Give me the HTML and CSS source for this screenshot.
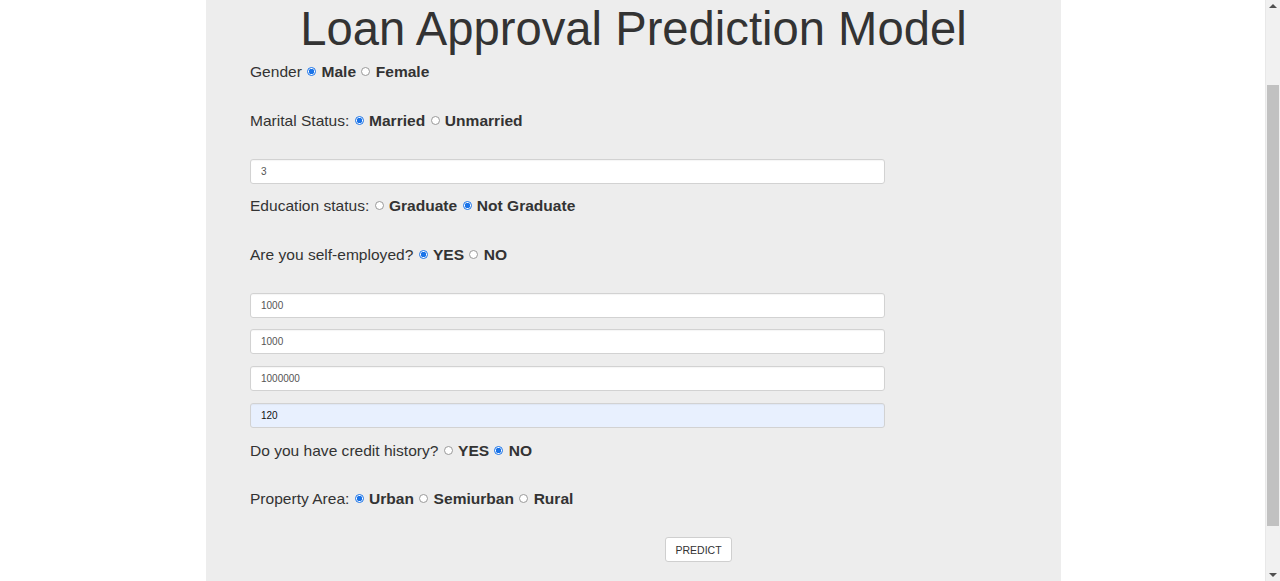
FILE: index.html
```html
<!DOCTYPE html>
<html>
<head>
<meta charset="utf-8">
<link rel="stylesheet" href="styles.css">
</head>
<body>
<div class="viewport">
  <main class="page">
    <div class="panel">
      <h1 class="title">Loan Approval Prediction Model</h1>
      <form class="form">
        <div class="radio-row">Gender <input type="radio" name="g" checked> <b>Male</b> <input type="radio" name="g"> <b>Female</b></div>
        <div class="radio-row">Marital Status: <input type="radio" name="m" checked> <b>Married</b> <input type="radio" name="m"> <b>Unmarried</b></div>
        <input class="field" type="text" value="3">
        <div class="radio-row">Education status: <input type="radio" name="e"> <b>Graduate</b> <input type="radio" name="e" checked> <b>Not Graduate</b></div>
        <div class="radio-row">Are you self-employed? <input type="radio" name="s" checked> <b>YES</b> <input type="radio" name="s"> <b>NO</b></div>
        <input class="field" type="text" value="1000">
        <input class="field" type="text" value="1000">
        <input class="field" type="text" value="1000000">
        <input class="field field-filled" type="text" value="120">
        <div class="radio-row radio-tight">Do you have credit history? <input type="radio" name="c"> <b>YES</b> <input type="radio" name="c" checked> <b>NO</b></div>
        <div class="radio-row radio-tight">Property Area: <input type="radio" name="p" checked> <b>Urban</b> <input type="radio" name="p"> <b>Semiurban</b> <input type="radio" name="p"> <b>Rural</b></div>
        <div class="actions"><button type="button" class="btn">PREDICT</button></div>
      </form>
    </div>
  </main>
  <div class="scrollbar">
    <div class="arrow arrow-up"></div>
    <div class="track"><div class="thumb"></div></div>
    <div class="arrow arrow-down"></div>
  </div>
</div>
</body>
</html>
```
FILE: styles.css
```css
html, body {
  margin: 0;
  padding: 0;
  height: 100%;
  overflow: hidden;
  background: #ffffff;
}
.viewport {
  display: flex;
  height: 581px;
}
.page {
  flex: 1;
  display: flex;
  justify-content: center;
  padding-left: 2px;
}
.panel {
  width: 855px;
  background: #ededed;
  padding: 0 44px;
  box-sizing: border-box;
  font-family: "Liberation Sans", Arial, sans-serif;
  color: #333333;
}
.title {
  margin: 1px 0 6px;
  font-size: 47.2px;
  font-weight: normal;
  line-height: 55px;
  text-align: center;
  color: #333333;
}
.form {
  display: flex;
  flex-direction: column;
  align-items: flex-start;
}
.radio-row {
  font-size: 15.55px;
  line-height: 20px;
  height: 20px;
  margin-bottom: 29px;
  white-space: nowrap;
}
.radio-tight {
  margin-bottom: 28px;
}
.radio-row b {
  font-weight: bold;
}
.radio-row input[type="radio"] {
  -webkit-appearance: none;
  appearance: none;
  width: 9px;
  height: 9px;
  margin: 0 1px;
  border: 1px solid #999999;
  border-radius: 50%;
  background: #ffffff;
  box-sizing: border-box;
  vertical-align: 1px;
}
.radio-row input[type="radio"]:checked {
  border-color: #1a73e8;
  background: radial-gradient(circle, #1a73e8 0 2.6px, #ffffff 3px);
}
.field {
  width: 635px;
  height: 25px;
  margin: 0 0 11.67px;
  padding: 0 10px;
  box-sizing: border-box;
  border: 1px solid #d2d2d2;
  border-radius: 3px;
  background: #ffffff;
  box-shadow: inset 0 1px 1px rgba(0,0,0,0.04);
  font-family: "Liberation Sans", Arial, sans-serif;
  font-size: 10px;
  color: #555555;
  outline: none;
}
.field-filled {
  background: #e8f0fe;
  color: #111111;
  margin-bottom: 13.5px;
}
.radio-row + .field {
  margin-top: -1px;
}
.actions {
  padding-left: 415px;
}
.btn {
  width: 67px;
  height: 25px;
  background: #ffffff;
  border: 1px solid #cfcfcf;
  border-radius: 3px;
  font-family: "Liberation Sans", Arial, sans-serif;
  font-size: 10.5px;
  color: #333333;
  padding: 0;
}
.scrollbar {
  width: 15px;
  background: #f1f1f1;
  display: flex;
  flex-direction: column;
  border-left: 1px solid #e8e8e8;
  box-sizing: border-box;
}
.arrow {
  height: 12px;
  display: flex;
  justify-content: center;
  align-items: center;
}
.arrow-up::before {
  content: "";
  border-left: 4px solid transparent;
  border-right: 4px solid transparent;
  border-bottom: 4px solid #505050;
}
.arrow-down::before {
  content: "";
  border-left: 4px solid transparent;
  border-right: 4px solid transparent;
  border-top: 4px solid #505050;
}
.track {
  flex: 1;
  padding-top: 73px;
  padding-bottom: 43px;
  display: flex;
  flex-direction: column;
}
.thumb {
  flex: 1;
  margin: 0 1px;
  background: #c1c1c1;
}
```
